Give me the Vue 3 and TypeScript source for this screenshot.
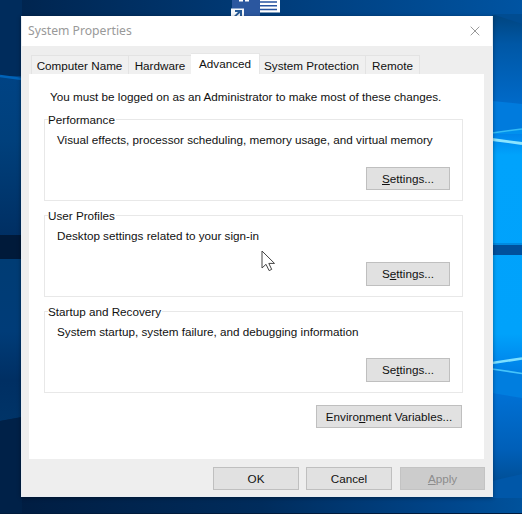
<script setup lang="ts">
interface Tab { label: string; key: string }
interface Group { title: string; text: string; before: string; hot: string; after: string; key: string }

const tabs: Tab[] = [
  { label: 'Computer Name', key: 'name' },
  { label: 'Hardware', key: 'hardware' },
  { label: 'Advanced', key: 'advanced' },
  { label: 'System Protection', key: 'protection' },
  { label: 'Remote', key: 'remote' },
]
const active = 'advanced'

const groups: Group[] = [
  { key: 'perf', title: 'Performance', text: 'Visual effects, processor scheduling, memory usage, and virtual memory', before: '', hot: 'S', after: 'ettings...' },
  { key: 'users', title: 'User Profiles', text: 'Desktop settings related to your sign-in', before: 'S', hot: 'e', after: 'ttings...' },
  { key: 'startup', title: 'Startup and Recovery', text: 'System startup, system failure, and debugging information', before: 'Se', hot: 't', after: 'tings...' },
]
</script>

<template>
  <div class="desktop">
    <svg class="wallpaper" width="522" height="514" viewBox="0 0 522 514" aria-hidden="true">
      <defs>
        <linearGradient id="edgeH" x1="0" x2="1" y1="0" y2="0">
          <stop offset="0" stop-color="#00234c" />
          <stop offset="0.5" stop-color="#003b78" />
          <stop offset="1" stop-color="#0054a2" />
        </linearGradient>
        <linearGradient id="bottomH" x1="0" x2="1" y1="0" y2="0">
          <stop offset="0" stop-color="#001c40" />
          <stop offset="0.5" stop-color="#002c5c" />
          <stop offset="0.85" stop-color="#00458a" />
          <stop offset="1" stop-color="#00529c" />
        </linearGradient>
        <linearGradient id="leftTop" x1="0" x2="0" y1="0" y2="1">
          <stop offset="0" stop-color="#004384" />
          <stop offset="0.4" stop-color="#00407c" />
          <stop offset="1" stop-color="#002f63" />
        </linearGradient>
        <linearGradient id="leftLow" x1="0" x2="0" y1="0" y2="1">
          <stop offset="0" stop-color="#003c74" />
          <stop offset="0.45" stop-color="#003c78" />
          <stop offset="0.75" stop-color="#002f63" />
          <stop offset="1" stop-color="#003468" />
        </linearGradient>
        <linearGradient id="rightV" x1="0" x2="0" y1="0" y2="1">
          <stop offset="0" stop-color="#004580" />
          <stop offset="0.06" stop-color="#0057a5" />
          <stop offset="0.19" stop-color="#006bcb" />
          <stop offset="0.25" stop-color="#0087ec" />
          <stop offset="0.29" stop-color="#00a3fc" />
          <stop offset="0.66" stop-color="#00a2fb" />
          <stop offset="0.72" stop-color="#0088ec" />
          <stop offset="0.77" stop-color="#0073d8" />
          <stop offset="0.9" stop-color="#005fb8" />
          <stop offset="1" stop-color="#004785" />
        </linearGradient>
      </defs>
      <rect width="522" height="514" fill="url(#edgeH)" />
      <rect y="490" width="522" height="24" fill="url(#bottomH)" />
      <rect width="22" height="76" fill="#002c5c" />
      <rect y="76" width="22" height="160" fill="url(#leftTop)" />
      <path d="M0 76 22 79" stroke="#0063b8" stroke-width="2.5" />
      <rect y="235" width="22" height="24" fill="#001a3a" />
      <path d="M0 259H22V417L0 421Z" fill="url(#leftLow)" />
      <path d="M0 421 22 417V514H0Z" fill="#002148" />
      <rect x="492" y="15" width="30" height="483" fill="url(#rightV)" />
      <path d="M492 14 522 24V14Z" fill="#004c91" />
      <path d="M492 101 522 104V130L492 134Z" fill="#007bdd" />
      <path d="M492 134 522 129V134Z" fill="#0090ee" />
      <path d="M492 133 522 129" stroke="#33bdf6" stroke-width="1.5" />
      <path d="M492 139.5 522 143.5" stroke="#8be5ff" stroke-width="2.8" />
      <rect x="492" y="243" width="30" height="3" fill="#008ae0" />
      <rect x="492" y="245" width="30" height="10" fill="#00509c" />
      <path d="M492 369 522 374V398L492 393Z" fill="#007edf" />
      <path d="M492 363 522 358.5" stroke="#7de0ff" stroke-width="2.6" />
      <path d="M492 369 522 373.5" stroke="#45c4fa" stroke-width="1.7" />
      <path d="M492 481 522 474V498H492Z" fill="#0057a8" />
      <rect y="513" width="522" height="1" fill="#001b3c" />
      <rect x="232" width="28" height="17" fill="#2b579f" />
      <path d="M239 0h4v1.5h-4zM245 0h4v1.5h-4z" fill="#fff" />
      <rect x="260" width="20" height="12.5" fill="#fff" />
      <path d="M260 2h17M260 5.7h17M260 9.5h17" stroke="#2854a0" stroke-width="1.6" />
      <rect x="231" y="8.5" width="13" height="8" fill="#f4f7fb" />
      <path d="M235 10h7v6.5h-2V13l-4 3.5h-2.5l4.5-4.5h-3z" fill="#265995" />
    </svg>

    <main class="dialog">
      <header class="titlebar">
        <span class="title">System Properties</span>
        <svg class="close" width="10" height="10" viewBox="0 0 10 10" aria-label="Close"><path d="M.7.7 9.3 9.3M9.3.7.7 9.3" /></svg>
      </header>
      <nav class="tabs">
        <div v-for="t in tabs" :key="t.key" class="tab" :class="[t.key, { active: t.key === active }]"><span>{{ t.label }}</span></div>
      </nav>
      <section class="panel">
        <p class="intro"><span>You must be logged on as an Administrator to make most of these changes.</span></p>
        <section v-for="g in groups" :key="g.key" class="group" :class="g.key">
          <h2><span>{{ g.title }}</span></h2>
          <p class="description"><span>{{ g.text }}</span></p>
          <button class="settings"><span>{{ g.before }}<u>{{ g.hot }}</u>{{ g.after }}</span></button>
        </section>
        <button class="environment"><span>Enviro<u>n</u>ment Variables...</span></button>
      </section>
      <footer class="actions">
        <button>OK</button>
        <button>Cancel</button>
        <button class="apply" disabled><span><u>A</u>pply</span></button>
      </footer>
    </main>

    <svg class="cursor" width="15" height="22" viewBox="0 0 15 22" aria-hidden="true">
      <path d="M1 1V18L5 14.3 8.1 20.6 10.7 19.4 7.8 13.4H13.5Z" />
    </svg>
  </div>
</template>

<style>
body { margin: 0; overflow: hidden; }
</style>

<style scoped>
* { box-sizing: border-box; }
.desktop { position: relative; width: 522px; height: 514px; padding: 16px 29px 17px 21px; overflow: hidden; font: 11.7px/14px "Liberation Sans", Arial, sans-serif; color: #111; }
.wallpaper { position: absolute; inset: 0; }
.dialog { position: relative; display: flex; flex-direction: column; width: 472px; height: 481px; padding: 0 8px 7px; background: #eee; border: 1px solid #e8edf2; border-top-color: #fff; box-shadow: 0 1px 4px #0006; }
.titlebar { display: flex; flex: none; align-items: center; justify-content: space-between; height: 29px; margin: 0 -8px; padding: 0 12px 1px 6px; background: #fff; }
.title { font: 12.2px/16px "Noto Sans", sans-serif; color: #999; white-space: nowrap; }
.close { fill: none; stroke: #999; stroke-width: 1; }
.tabs { display: flex; flex: none; align-items: flex-end; height: 28px; padding-left: 1px; }
.tab { display: flex; flex: none; align-items: center; justify-content: center; height: 19px; padding-top: 2px; border: 1px solid #e3e3e3; border-bottom: 0; border-left: 0; background: #f0f0f0; white-space: nowrap; }
.name { width: 98px; padding-right: 1px; border-left: 1px solid #e3e3e3; }
.hardware { width: 62px; border-right: 0; }
.advanced { width: 69px; }
.protection { width: 106px; padding-right: 2px; }
.remote { width: 54px; }
.tab.active { height: 21px; padding: 0 0 1px; background: #fff; border-color: #e6e6e6; }
.panel { display: flex; flex: none; flex-direction: column; width: 455px; height: 385px; margin-left: -1px; padding: 15px 21px 0 15px; background: #fff; }
p { margin: 0; white-space: nowrap; }
.intro { padding: 0 0 0 6px; height: 30px; line-height: 16px; }
.group { display: flex; flex-direction: column; height: 82px; margin-bottom: 14px; border: 1px solid #e8e8e8; }
.group.startup { margin-bottom: 12px; }
h2 { align-self: flex-start; height: 14px; margin: -7px 0 0 3px; padding: 0 1px 0 0; font: inherit; background: #fff; white-space: nowrap; }
.description { padding: 6px 0 0 12px; }
button { display: flex; align-items: center; justify-content: center; height: 23px; padding: 0; border: 1px solid #bfbfbf; border-radius: 0; background: #e1e1e1; color: #111; font: inherit; white-space: nowrap; }
u { text-decoration-thickness: 1px; text-underline-offset: 1px; }
.settings { align-self: flex-end; flex: none; width: 84px; margin: 20px 12px 0 0; }
.users .settings, .startup .settings { margin-top: 19px; height: 24px; }
.environment { align-self: flex-end; width: 146px; margin-right: 1px; }
.actions { display: flex; gap: 7px; justify-content: flex-end; margin: 8px -1px 0 0; }
.actions button { width: 86px; }
.actions .apply { width: 85px; margin-left: 1px; color: #8c8c8c; background: #ccc; border-color: #c3c3c3; }
.cursor { position: absolute; left: 261px; top: 250px; fill: #fff; stroke: #444; stroke-width: 1; }
</style>
